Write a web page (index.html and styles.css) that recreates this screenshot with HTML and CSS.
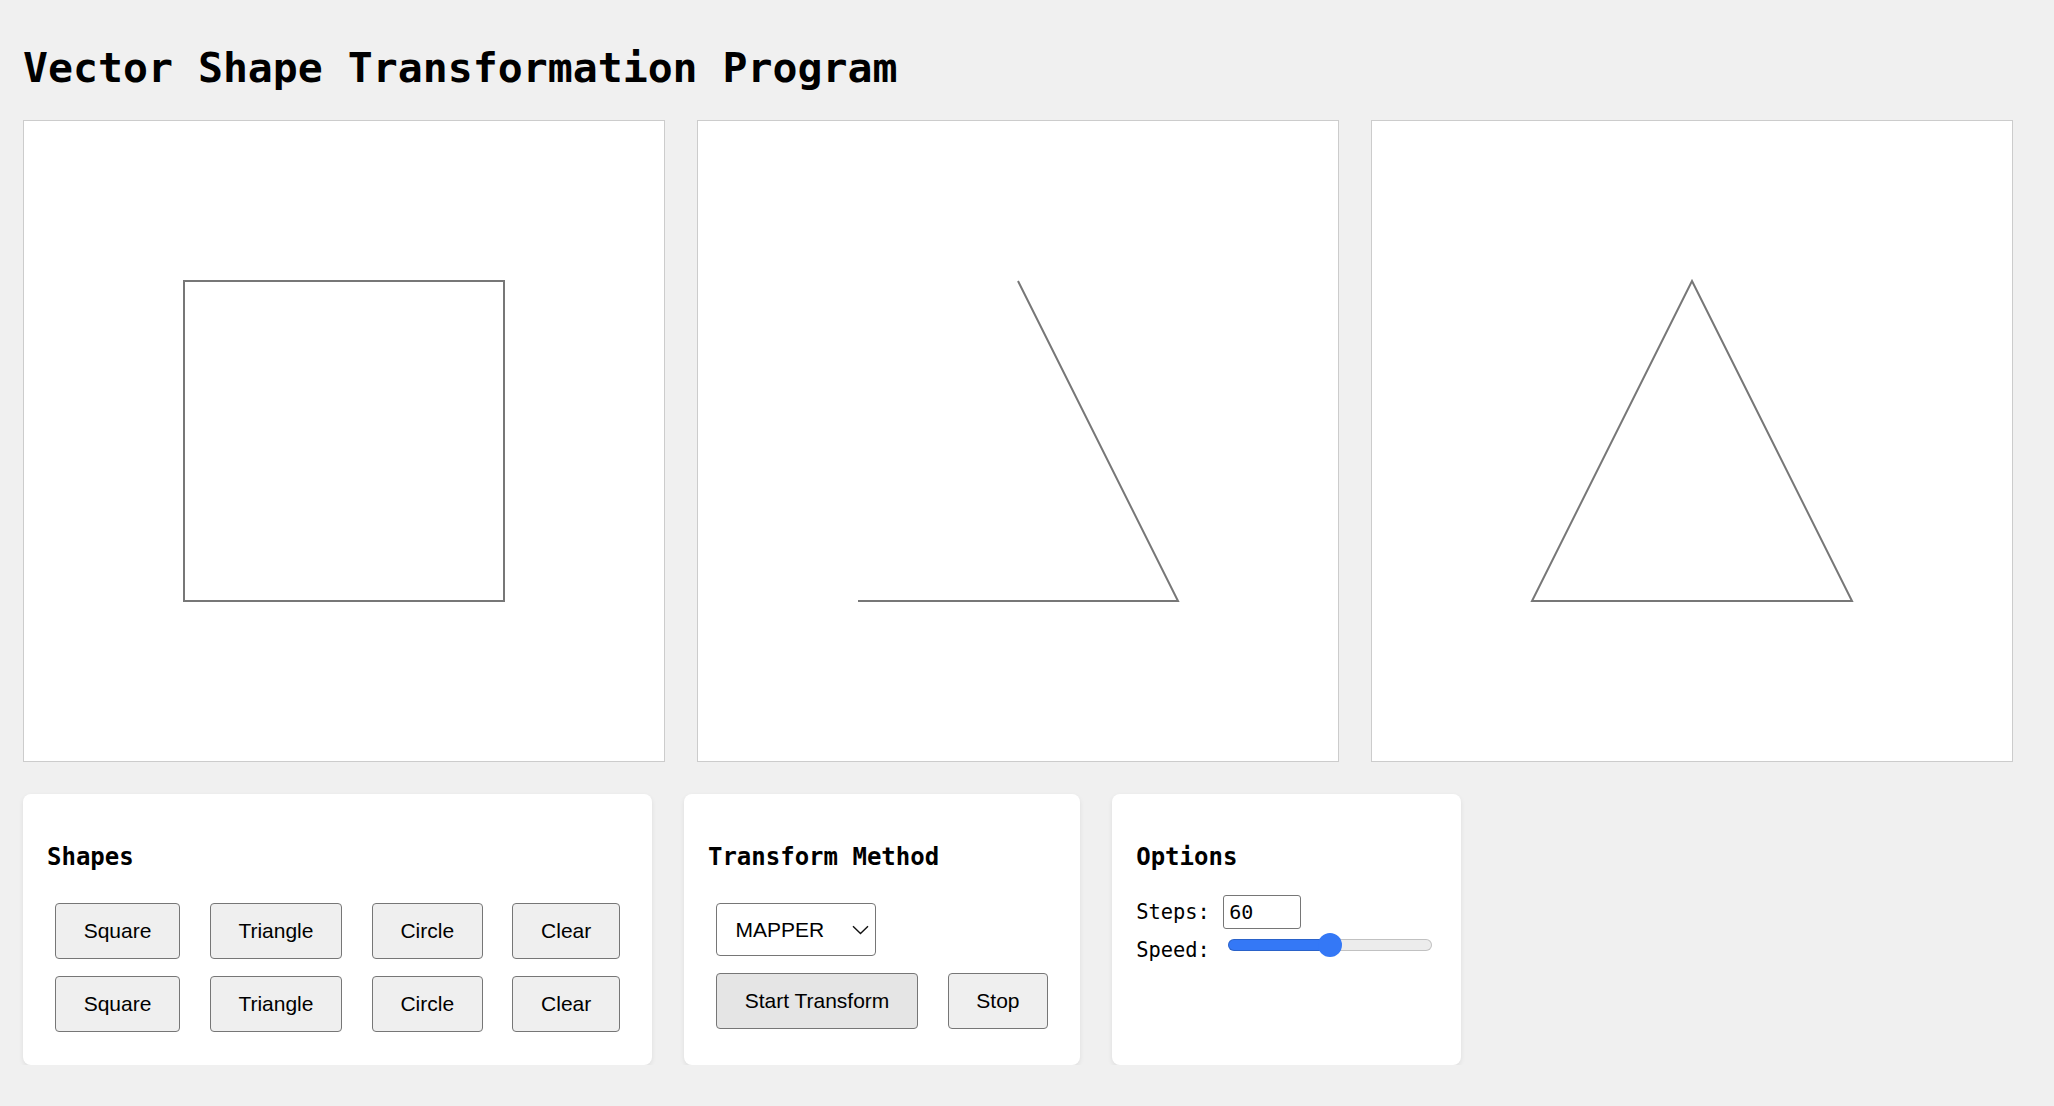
FILE: index.html
```html
<!DOCTYPE html>
<html lang="en">
<head>
<meta charset="utf-8">
<title>Vector Shape Transformation Program</title>
<link rel="stylesheet" href="styles.css">
</head>
<body>
  <h1 class="title">Vector Shape Transformation Program</h1>

  <div class="canvases">
    <div class="canvas">
      <svg width="640" height="640" viewBox="0 0 640 640">
        <rect x="160" y="160" width="320" height="320" class="shape"/>
      </svg>
    </div>
    <div class="canvas">
      <svg width="640" height="640" viewBox="0 0 640 640">
        <polyline points="320,160 480,480 160,480" class="shape"/>
      </svg>
    </div>
    <div class="canvas">
      <svg width="640" height="640" viewBox="0 0 640 640">
        <polygon points="320,160 480,480 160,480" class="shape"/>
      </svg>
    </div>
  </div>

  <div class="panels">
    <section class="panel">
      <h3 class="panel-title">Shapes</h3>
      <div class="btn-grid">
        <div class="btn-row">
          <button class="btn">Square</button>
          <button class="btn">Triangle</button>
          <button class="btn">Circle</button>
          <button class="btn">Clear</button>
        </div>
        <div class="btn-row">
          <button class="btn">Square</button>
          <button class="btn">Triangle</button>
          <button class="btn">Circle</button>
          <button class="btn">Clear</button>
        </div>
      </div>
    </section>

    <section class="panel">
      <h3 class="panel-title">Transform Method</h3>
      <div class="method-body">
        <div class="select-wrap">
          <select class="select">
            <option>MAPPER</option>
            <option>LINEAR</option>
          </select>
          <svg class="chevron" width="17" height="10" viewBox="0 0 17 10">
            <path d="M1 1.2 L8.5 8.6 L16 1.2" fill="none" stroke="#111" stroke-width="1.4"/>
          </svg>
        </div>
        <div class="btn-row">
          <button class="btn btn-active">Start Transform</button>
          <button class="btn">Stop</button>
        </div>
      </div>
    </section>

    <section class="panel">
      <h3 class="panel-title">Options</h3>
      <div class="opt-row opt-steps">
        <label class="opt-label">Steps:</label>
        <input class="num" type="text" value="60">
      </div>
      <div class="opt-row opt-speed">
        <label class="opt-label">Speed:</label>
        <input class="range" type="range" min="0" max="100" value="50">
      </div>
    </section>
  </div>
</body>
</html>
```

FILE: styles.css
```css
html, body {
  margin: 0;
  padding: 0;
}

body {
  background: #f0f0f0;
  padding: 0 23px;
  font-family: "DejaVu Sans Mono", monospace;
  color: #000;
}

.title {
  font-family: "DejaVu Sans Mono", monospace;
  font-weight: bold;
  font-size: 41.5px;
  line-height: 48px;
  margin: 44px 0 28px;
}

.canvases {
  display: flex;
  gap: 32px;
}

.canvas {
  width: 640px;
  height: 640px;
  background: #fff;
  border: 1px solid #cccccc;
  flex: none;
}

.canvas svg {
  display: block;
}

.shape {
  fill: none;
  stroke: #777777;
  stroke-width: 2;
}

.panels {
  display: flex;
  gap: 32px;
  margin-top: 32px;
  align-items: stretch;
}

.panel {
  background: #fff;
  border-radius: 8px;
  padding: 24px 24px 25px;
  box-shadow: 0 2px 5px rgba(0, 0, 0, 0.08);
  flex: none;
}

.panel-title {
  font-family: "DejaVu Sans Mono", monospace;
  font-weight: bold;
  font-size: 24px;
  line-height: 28px;
  margin: 25px 0 24px;
}

.btn-grid {
  display: flex;
  flex-direction: column;
  gap: 17px;
  padding: 8px;
}

.btn-row {
  display: flex;
  gap: 29.6px;
}

.btn {
  font-family: "Liberation Sans", Arial, sans-serif;
  font-size: 21px;
  line-height: 24px;
  padding: 15px 27.7px;
  background: #efefef;
  border: 1px solid #767676;
  border-radius: 4px;
  color: #000;
  margin: 0;
}

.btn-active {
  background: #e5e5e5;
}

.method-body {
  display: flex;
  flex-direction: column;
  align-items: flex-start;
  gap: 17px;
  padding: 8px;
}

.select-wrap {
  position: relative;
  width: 160px;
  height: 53px;
}

.select {
  appearance: none;
  -webkit-appearance: none;
  width: 160px;
  height: 53px;
  margin: 0;
  padding: 0 0 0 18.5px;
  border: 1px solid #767676;
  border-radius: 4px;
  background: #fff;
  font-family: "Liberation Sans", Arial, sans-serif;
  font-size: 21px;
  color: #000;
}

.chevron {
  position: absolute;
  left: 136px;
  top: 22px;
  pointer-events: none;
}

.opt-row {
  display: flex;
}

.opt-label {
  font-family: "DejaVu Sans Mono", monospace;
  font-size: 20.4px;
  line-height: 24px;
  width: 74px;
}

.opt-steps {
  align-items: center;
  height: 34px;
}

.num {
  box-sizing: border-box;
  width: 77.5px;
  height: 34px;
  margin: 0 0 0 13px;
  padding: 0 5px;
  border: 1px solid #767676;
  border-radius: 3px;
  font-family: "DejaVu Sans Mono", monospace;
  font-size: 20px;
  color: #000;
  background: #fff;
}

.opt-speed {
  align-items: flex-start;
}

.opt-speed .opt-label {
  margin-top: 8.5px;
}

.range {
  -webkit-appearance: none;
  appearance: none;
  width: 204px;
  height: 24px;
  margin: 4px 5px 0 18px;
  padding: 0;
  background: transparent;
}

.range::-webkit-slider-runnable-track {
  height: 12px;
  border-radius: 6px;
  background: linear-gradient(to right, #3478f6 0, #3478f6 50%, #ececec 50%, #ececec 100%);
  box-shadow: inset 0 0 0 1px rgba(0, 0, 0, 0.18);
}

.range::-webkit-slider-thumb {
  -webkit-appearance: none;
  appearance: none;
  width: 24px;
  height: 24px;
  border-radius: 50%;
  background: #3478f6;
  border: none;
  margin-top: -6px;
}
```
